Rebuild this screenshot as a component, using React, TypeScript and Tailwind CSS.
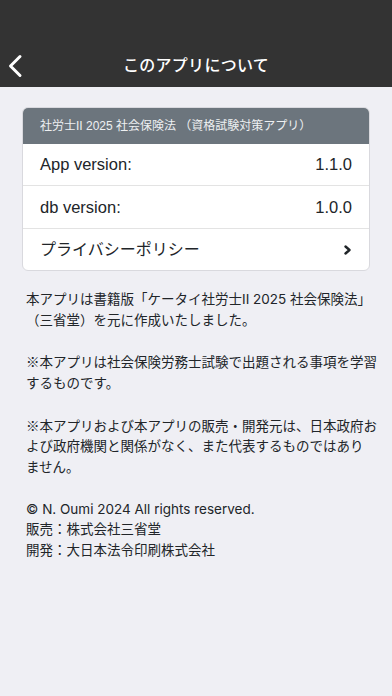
import React from "react";

const font = { fontFamily: '"Liberation Sans", "Noto Sans CJK JP", sans-serif' };
const pfont = { fontFamily: 'Inter, "Noto Sans CJK JP", sans-serif' };
const cjk = { fontFamily: '"Noto Sans CJK JP", sans-serif' };

export default function App() {
  return (
    <div
      className="w-[392px] h-[696px] bg-[#efeff4] text-[#212529] overflow-hidden"
      style={font}
    >
      {/* Nav */}
      <div className="h-[87px] bg-[#333333] flex flex-col justify-end">
        <div className="h-[43px] relative flex items-center justify-center">
          <svg
            className="absolute left-[6px] top-[10px]"
            width="18"
            height="24"
            viewBox="0 0 18 24"
            fill="none"
          >
            <polyline
              points="14,2.5 4.5,12 14,21.5"
              stroke="white"
              strokeWidth="3"
              strokeLinecap="round"
              strokeLinejoin="round"
            />
          </svg>
          <span className="text-white text-[16px] font-medium tracking-[0.3px]">
            このアプリについて
          </span>
        </div>
      </div>

      {/* Card */}
      <div className="mx-[22px] mt-[20px] rounded-[6px] border border-[#d9d9de] bg-white overflow-hidden">
        <div className="h-[36px] bg-[#6c757d] flex items-center px-[17px] text-[12px] text-[#eef0f2]">
          社労士II 2025 社会保険法 （資格試験対策アプリ）
        </div>
        <div className="h-[42px] flex items-center justify-between px-[17px] text-[16.5px] border-b border-[#e3e3e3]">
          <span>App version:</span>
          <span>1.1.0</span>
        </div>
        <div className="h-[43px] flex items-center justify-between px-[17px] text-[16.5px] border-b border-[#e3e3e3]">
          <span>db version:</span>
          <span>1.0.0</span>
        </div>
        <div className="h-[41px] flex items-center justify-between pl-[17px] pr-[17px] text-[16px]">
          <span>プライバシーポリシー</span>
          <svg width="9" height="10" viewBox="0 0 9 10" fill="none">
            <polyline
              points="2.5,1.5 6.5,5 2.5,8.5"
              stroke="#212529"
              strokeWidth="2.4"
              strokeLinecap="round"
              strokeLinejoin="round"
            />
          </svg>
        </div>
      </div>

      {/* Text */}
      <div
        className="px-[26px] mt-[18px] text-[13.5px] leading-[20.75px] whitespace-nowrap"
        style={pfont}
      >
        <p>
          本アプリは書籍版「ケータイ社労士II 2025 社会保険法」
          <br />
          （三省堂）を元に作成いたしました。
        </p>
        <p className="mt-[20.75px]">
          <span style={cjk}>※</span>本アプリは社会保険労務士試験で出題される事項を学習
          <br />
          するものです。
        </p>
        <p className="mt-[20.75px]">
          <span style={cjk}>※</span>本アプリおよび本アプリの販売・開発元は、日本政府お
          <br />
          よび政府機関と関係がなく、また代表するものではあり
          <br />
          ません。
        </p>
        <p className="mt-[20.75px]">
          © N. Oumi 2024 All rights reserved.
          <br />
          販売：株式会社三省堂
          <br />
          開発：大日本法令印刷株式会社
        </p>
      </div>
    </div>
  );
}
